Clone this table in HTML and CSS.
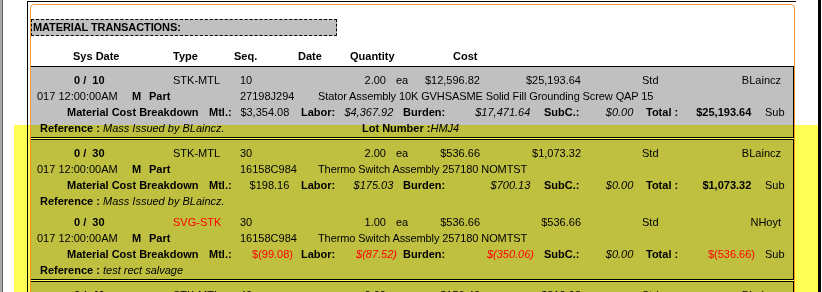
FILE: index.html
```html
<!DOCTYPE html>
<html>
<head>
<meta charset="utf-8">
<link rel="stylesheet" href="styles.css">
</head>
<body>
<div class="screen">
  <div class="gutter"></div>
  <div class="margin"></div>
  <div class="page">
    <div class="frame"></div>
    <div class="title">MATERIAL TRANSACTIONS:</div>
    <div class="headers">
      <span>Sys Date</span><span>Type</span><span>Seq.</span><span>Date</span><span>Quantity</span><span>Cost</span>
    </div>

    <div class="record">
      <div class="txn">
        <div class="row r1">
          <span class="b">0 /&nbsp; 10</span><span>STK-MTL</span><span>10</span><span class="rt">2.00</span><span class="uom">ea</span><span class="rt">$12,596.82</span><span class="rt">$25,193.64</span><span class="std">Std</span><span class="rt">BLaincz</span>
        </div>
        <div class="row r2">
          <span class="date">017 12:00:00AM</span><span class="b">M</span><span class="b">Part</span><span>27198J294</span><span class="desc">Stator Assembly 10K GVHSASME Solid Fill Grounding Screw QAP 15</span>
        </div>
        <div class="row r3">
          <span class="b">Material Cost Breakdown</span><span class="b">Mtl.:</span><span class="rt pos">$3,354.08</span><span class="b lbl-labor">Labor:</span><span class="rt pos i">$4,367.92</span><span class="b lbl-burden">Burden:</span><span class="rt pos i">$17,471.64</span><span class="b lbl-subc">SubC.:</span><span class="rt pos i">$0.00</span><span class="b lbl-total">Total :</span><span class="rt pos b">$25,193.64</span><span class="sub">Sub</span>
        </div>
        <div class="row r4">
          <span><b>Reference :</b> <i>Mass Issued by BLaincz.</i></span><span><b>Lot Number :</b><i>HMJ4</i></span>
        </div>
      </div>
    </div>

    <div class="record">
      <div class="txn">
        <div class="row r1">
          <span class="b">0 /&nbsp; 30</span><span>STK-MTL</span><span>30</span><span class="rt">2.00</span><span class="uom">ea</span><span class="rt">$536.66</span><span class="rt">$1,073.32</span><span class="std">Std</span><span class="rt">BLaincz</span>
        </div>
        <div class="row r2">
          <span class="date">017 12:00:00AM</span><span class="b">M</span><span class="b">Part</span><span>16158C984</span><span class="desc">Thermo Switch Assembly 257180 NOMTST</span>
        </div>
        <div class="row r3">
          <span class="b">Material Cost Breakdown</span><span class="b">Mtl.:</span><span class="rt pos">$198.16</span><span class="b lbl-labor">Labor:</span><span class="rt pos i">$175.03</span><span class="b lbl-burden">Burden:</span><span class="rt pos i">$700.13</span><span class="b lbl-subc">SubC.:</span><span class="rt pos i">$0.00</span><span class="b lbl-total">Total :</span><span class="rt pos b">$1,073.32</span><span class="sub">Sub</span>
        </div>
        <div class="row r4">
          <span><b>Reference :</b> <i>Mass Issued by BLaincz.</i></span><span></span>
        </div>
      </div>
      <div class="txn">
        <div class="row r1">
          <span class="b">0 /&nbsp; 30</span><span class="red">SVG-STK</span><span>30</span><span class="rt">1.00</span><span class="uom">ea</span><span class="rt">$536.66</span><span class="rt">$536.66</span><span class="std">Std</span><span class="rt">NHoyt</span>
        </div>
        <div class="row r2">
          <span class="date">017 12:00:00AM</span><span class="b">M</span><span class="b">Part</span><span>16158C984</span><span class="desc">Thermo Switch Assembly 257180 NOMTST</span>
        </div>
        <div class="row r3">
          <span class="b">Material Cost Breakdown</span><span class="b">Mtl.:</span><span class="rt red">$(99.08)</span><span class="b lbl-labor">Labor:</span><span class="rt red i">$(87.52)</span><span class="b lbl-burden">Burden:</span><span class="rt red i">$(350.06)</span><span class="b lbl-subc">SubC.:</span><span class="rt pos i">$0.00</span><span class="b lbl-total">Total :</span><span class="rt red">$(536.66)</span><span class="sub">Sub</span>
        </div>
        <div class="row r4">
          <span><b>Reference :</b> <i>test rect salvage</i></span><span></span>
        </div>
      </div>
    </div>

    <div class="record">
      <div class="txn">
        <div class="row r1">
          <span class="b">0 /&nbsp; 40</span><span>STK-MTL</span><span>40</span><span class="rt">2.00</span><span class="uom">ea</span><span class="rt">$156.49</span><span class="rt">$312.98</span><span class="std">Std</span><span class="rt">BLaincz</span>
        </div>
      </div>
    </div>
  </div>
  <div class="rspace"></div>
  <div class="rbar"></div>
</div>
<div class="highlight"></div>
</body>
</html>
```

FILE: styles.css
```css
* { box-sizing: border-box; }
html, body { margin: 0; padding: 0; }
body {
  width: 822px;
  height: 292px;
  overflow: hidden;
  background: #fff;
  font-family: "Liberation Sans", Arial, sans-serif;
  font-size: 11px;
  color: #000;
  position: relative;
}
.screen { display: flex; height: 292px; }
.gutter { width: 3px; flex: none; background: #a8a8a8; border-right: 1px solid #606060; }
.margin { width: 24px; flex: none; }
.page {
  width: 769px;
  flex: none;
  margin-top: 1px;
  border-left: 1px solid #000;
  border-top: 1px solid #000;
  position: relative;
}
.rspace { width: 22px; flex: none; }
.rbar { width: 3px; flex: none; background: #000; }

.frame {
  position: absolute;
  left: 2px;
  top: 2px;
  width: 765px;
  height: 400px;
  border: 1px solid #f59a3e;
  border-radius: 4px;
  pointer-events: none;
  z-index: 2;
}
.title {
  margin: 17px 0 0 3px;
  width: 306px;
  height: 17px;
  border: 1px dashed #000;
  background: #c0c0c0;
  font-weight: bold;
  line-height: 15px;
  padding-left: 1px;
  white-space: nowrap;
  letter-spacing: -0.1px;
}
.headers {
  display: grid;
  grid-template-columns: 100px 61px 64px 52px 103px auto;
  margin: 12px 0 0 3px;
  padding-left: 42px;
  height: 16px;
  line-height: 16px;
  font-weight: bold;
}
.record {
  margin: 2px 0 0 2px;
  width: 764px;
  border: 1px solid #000;
  background: #c0c0c0;
  padding-bottom: 1px;
}
.record + .record { margin-top: 1px; }
.txn { padding-top: 5px; }
.row {
  display: grid;
  height: 16px;
  line-height: 16px;
  white-space: nowrap;
}
.r1 {
  padding-left: 43px;
  grid-template-columns: 99px 67px 100px 46px 24px 70px 101px 121px 79px;
}
.r2 { grid-template-columns: 101px 17px 91px 78px 1fr; }
.r3 {
  padding-left: 36px;
  grid-template-columns: 142px 31px 53px 47px 57px 53px 84px 46px 57px 53px 65px auto;
}
.r4 {
  padding-left: 9px;
  grid-template-columns: 322px 1fr;
}
.desc { letter-spacing: -0.1px; }
.b { font-weight: bold; }
.i { font-style: italic; }
.rt { text-align: right; }
.pos { padding-right: 3.7px; }
.red { color: #ff0000; }
.uom { padding-left: 10px; }
.std { padding-left: 61px; }
.date { padding-left: 6px; }
.lbl-labor { padding-left: 8px; }
.lbl-burden { padding-left: 6px; }
.lbl-subc { padding-left: 10px; }
.lbl-total { padding-left: 9px; }
.sub { padding-left: 10px; }

.highlight {
  position: absolute;
  left: 14px;
  top: 125px;
  width: 804px;
  height: 167px;
  background: #ffff55;
  mix-blend-mode: multiply;
  pointer-events: none;
  z-index: 5;
}
```
